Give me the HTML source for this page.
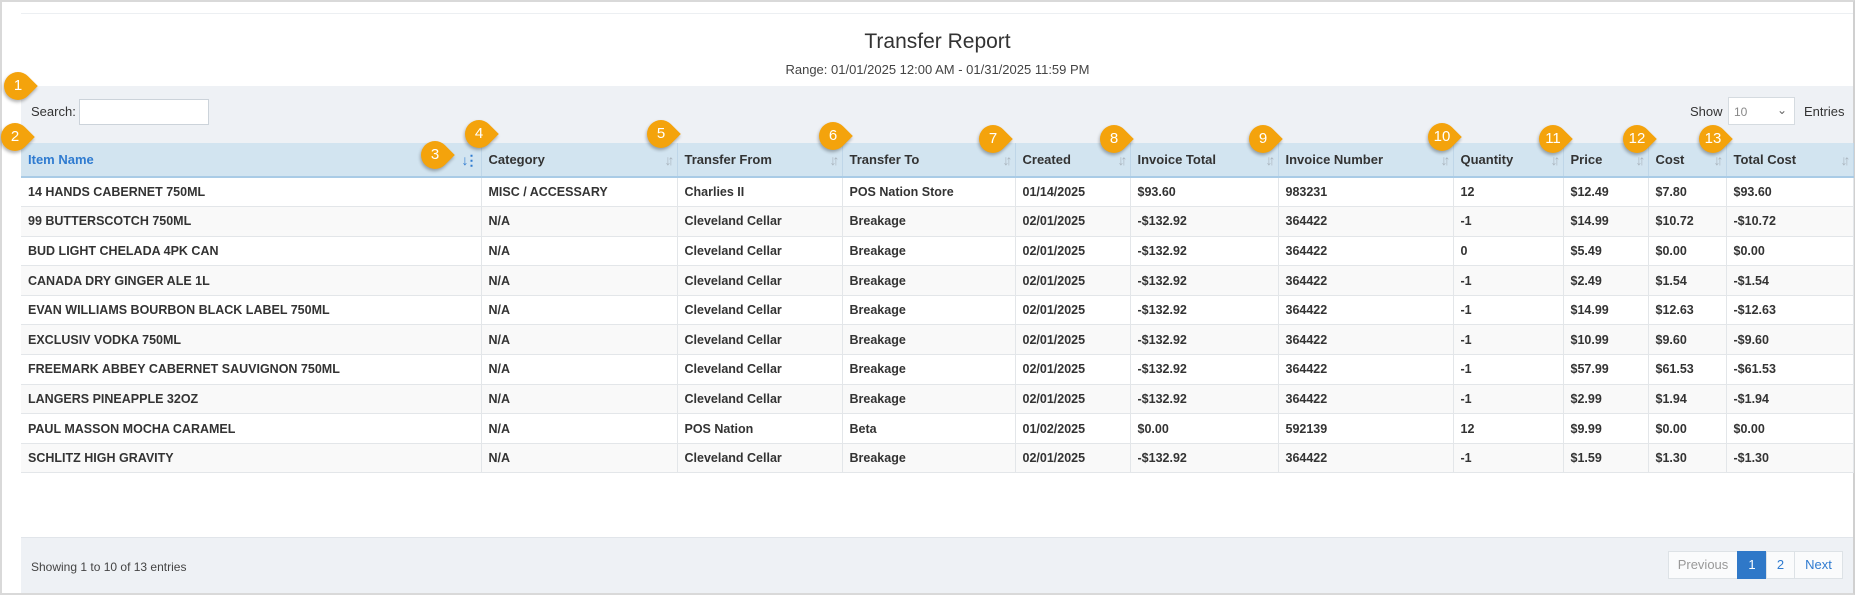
<!DOCTYPE html>
<html><head><meta charset="utf-8"><style>
*{box-sizing:border-box;margin:0;padding:0}
body{width:1855px;height:595px;background:#fff;font-family:"Liberation Sans",Arial,sans-serif;position:relative;overflow:hidden;color:#333}
.frame{position:absolute;left:0;top:0;width:1855px;height:595px;border:2px solid #d9d9d9;border-right:2px solid #d0d0d0}
.hr{position:absolute;left:21px;top:13px;width:1832px;height:1px;background:#eceff2}
.title{position:absolute;left:0;width:1875px;text-align:center;top:30px;font-size:21px;color:#333}
.range{position:absolute;left:0;width:1875px;text-align:center;top:62px;font-size:13px;color:#444}
.tool{position:absolute;left:21px;top:86px;width:1832px;height:57px;background:#eef1f5}
.search{position:absolute;left:31px;top:104px;font-size:13px}
.sbox{position:absolute;left:79px;top:99px;width:130px;height:26px;background:#fff;border:1px solid #ccd3da}
.show{position:absolute;left:1690px;top:104px;font-size:13px}
.sel{position:absolute;left:1728px;top:97px;width:67px;height:28px;background:#fff;border:1px solid #d5dbe0;font-size:12px;color:#888;padding:7px 5px}
.sel span{position:absolute;right:7px;top:5px;color:#666}
.ent{position:absolute;left:1804px;top:104px;font-size:13px}
table{position:absolute;left:21px;top:143px;width:1832px;border-collapse:collapse;table-layout:fixed}
th{background:#d2e4f0;height:34px;text-align:left;font-size:13px;padding:0 7px;border-right:1px solid #bfd6e8;border-bottom:2px solid #a9cbe6;position:relative;color:#333}
th i{position:absolute;right:6px;top:9px;font-style:normal;color:#a9b4bd;font-size:14px;letter-spacing:-4px}
th.a{color:#2f7bd0}th.a i{color:#2f7bd0}
td{height:29.6px;font-size:12.5px;font-weight:bold;padding:0 7px;border-right:1px solid #e3e6e9;border-bottom:1px solid #e3e6e9;white-space:nowrap;color:#333}
tr:nth-child(odd) td{background:#f9f9f9}
.foot{position:absolute;left:21px;top:537px;width:1832px;height:56px;background:#eef1f5;border-top:1px solid #e1e5ea}
.info{position:absolute;left:31px;top:560px;font-size:12px;color:#444}
.pg{position:absolute;top:551px;height:28px;font-size:13px;border:1px solid #dde2e6;background:#fafbfc;color:#2f7bd0;text-align:center;line-height:26px}
.m{position:absolute;width:28px;height:28px;background:#f4a30c;border-radius:50% 0 50% 50%;transform:rotate(45deg);box-shadow:1px 2px 3px rgba(0,0,0,.3)}
.mn{position:absolute;width:28px;height:28px;line-height:28px;text-align:center;color:#fff;font-size:15px}
</style></head><body>
<div class="frame"></div>
<div class="hr"></div>
<div class="title">Transfer Report</div>
<div class="range">Range: 01/01/2025 12:00 AM - 01/31/2025 11:59 PM</div>
<div class="tool"></div>
<div class="search">Search:</div><div class="sbox"></div>
<div class="show">Show</div><div class="sel">10<span>&#8964;</span></div><div class="ent">Entries</div>
<table>
<colgroup><col style="width:460px"><col style="width:196px"><col style="width:165px"><col style="width:173px"><col style="width:115px"><col style="width:148px"><col style="width:175px"><col style="width:110px"><col style="width:85px"><col style="width:78px"><col style="width:127px"></colgroup>
<tr><th class="a">Item Name<i>↓⋮</i></th><th>Category<i>↓↑</i></th><th>Transfer From<i>↓↑</i></th><th>Transfer To<i>↓↑</i></th><th>Created<i>↓↑</i></th><th>Invoice Total<i>↓↑</i></th><th>Invoice Number<i>↓↑</i></th><th>Quantity<i>↓↑</i></th><th>Price<i>↓↑</i></th><th>Cost<i>↓↑</i></th><th>Total Cost<i>↓↑</i></th></tr>
<tr><td>14 HANDS CABERNET 750ML</td><td>MISC / ACCESSARY</td><td>Charlies II</td><td>POS Nation Store</td><td>01/14/2025</td><td>$93.60</td><td>983231</td><td>12</td><td>$12.49</td><td>$7.80</td><td>$93.60</td></tr>
<tr><td>99 BUTTERSCOTCH 750ML</td><td>N/A</td><td>Cleveland Cellar</td><td>Breakage</td><td>02/01/2025</td><td>-$132.92</td><td>364422</td><td>-1</td><td>$14.99</td><td>$10.72</td><td>-$10.72</td></tr>
<tr><td>BUD LIGHT CHELADA 4PK CAN</td><td>N/A</td><td>Cleveland Cellar</td><td>Breakage</td><td>02/01/2025</td><td>-$132.92</td><td>364422</td><td>0</td><td>$5.49</td><td>$0.00</td><td>$0.00</td></tr>
<tr><td>CANADA DRY GINGER ALE 1L</td><td>N/A</td><td>Cleveland Cellar</td><td>Breakage</td><td>02/01/2025</td><td>-$132.92</td><td>364422</td><td>-1</td><td>$2.49</td><td>$1.54</td><td>-$1.54</td></tr>
<tr><td>EVAN WILLIAMS BOURBON BLACK LABEL 750ML</td><td>N/A</td><td>Cleveland Cellar</td><td>Breakage</td><td>02/01/2025</td><td>-$132.92</td><td>364422</td><td>-1</td><td>$14.99</td><td>$12.63</td><td>-$12.63</td></tr>
<tr><td>EXCLUSIV VODKA 750ML</td><td>N/A</td><td>Cleveland Cellar</td><td>Breakage</td><td>02/01/2025</td><td>-$132.92</td><td>364422</td><td>-1</td><td>$10.99</td><td>$9.60</td><td>-$9.60</td></tr>
<tr><td>FREEMARK ABBEY CABERNET SAUVIGNON 750ML</td><td>N/A</td><td>Cleveland Cellar</td><td>Breakage</td><td>02/01/2025</td><td>-$132.92</td><td>364422</td><td>-1</td><td>$57.99</td><td>$61.53</td><td>-$61.53</td></tr>
<tr><td>LANGERS PINEAPPLE 32OZ</td><td>N/A</td><td>Cleveland Cellar</td><td>Breakage</td><td>02/01/2025</td><td>-$132.92</td><td>364422</td><td>-1</td><td>$2.99</td><td>$1.94</td><td>-$1.94</td></tr>
<tr><td>PAUL MASSON MOCHA CARAMEL</td><td>N/A</td><td>POS Nation</td><td>Beta</td><td>01/02/2025</td><td>$0.00</td><td>592139</td><td>12</td><td>$9.99</td><td>$0.00</td><td>$0.00</td></tr>
<tr><td>SCHLITZ HIGH GRAVITY</td><td>N/A</td><td>Cleveland Cellar</td><td>Breakage</td><td>02/01/2025</td><td>-$132.92</td><td>364422</td><td>-1</td><td>$1.59</td><td>$1.30</td><td>-$1.30</td></tr>
</table>
<div class="foot"></div>
<div class="info">Showing 1 to 10 of 13 entries</div>
<div class="pg" style="left:1668px;width:70px;color:#999">Previous</div>
<div class="pg" style="left:1737px;width:30px;background:#2f78c8;color:#fff;border-color:#2f78c8">1</div>
<div class="pg" style="left:1766px;width:29px">2</div>
<div class="pg" style="left:1794px;width:49px">Next</div>

<div class="m" style="left:4px;top:72px"></div><div class="mn" style="left:4px;top:72px">1</div>
<div class="m" style="left:1px;top:123px"></div><div class="mn" style="left:1px;top:123px">2</div>
<div class="m" style="left:421px;top:141px"></div><div class="mn" style="left:421px;top:141px">3</div>
<div class="m" style="left:465px;top:120px"></div><div class="mn" style="left:465px;top:120px">4</div>
<div class="m" style="left:647px;top:120px"></div><div class="mn" style="left:647px;top:120px">5</div>
<div class="m" style="left:819px;top:122px"></div><div class="mn" style="left:819px;top:122px">6</div>
<div class="m" style="left:979px;top:125px"></div><div class="mn" style="left:979px;top:125px">7</div>
<div class="m" style="left:1100px;top:125px"></div><div class="mn" style="left:1100px;top:125px">8</div>
<div class="m" style="left:1249px;top:125px"></div><div class="mn" style="left:1249px;top:125px">9</div>
<div class="m" style="left:1428px;top:123px"></div><div class="mn" style="left:1428px;top:123px">10</div>
<div class="m" style="left:1539px;top:125px"></div><div class="mn" style="left:1539px;top:125px">11</div>
<div class="m" style="left:1623px;top:125px"></div><div class="mn" style="left:1623px;top:125px">12</div>
<div class="m" style="left:1699px;top:125px"></div><div class="mn" style="left:1699px;top:125px">13</div>
</body></html>
